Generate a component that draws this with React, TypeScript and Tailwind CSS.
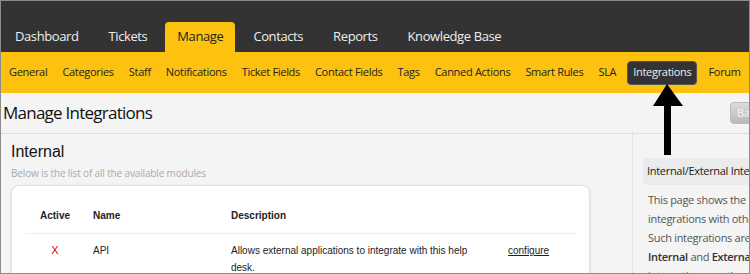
import React from "react";

// Top level tabs of the help desk admin
const mainTabs = ["Dashboard", "Tickets", "Manage", "Contacts", "Reports", "Knowledge Base"];

const subTabs = [
  "General",
  "Categories",
  "Staff",
  "Notifications",
  "Ticket Fields",
  "Contact Fields",
  "Tags",
  "Canned Actions",
  "Smart Rules",
  "SLA",
  "Integrations",
  "Forum",
];

function PointerArrow() {
  return (
    <svg
      className="absolute left-[651px] top-[83px]"
      width="32"
      height="72"
      viewBox="0 0 32 72"
      aria-hidden="true"
    >
      <polygon points="15,0 31,22 1,22" fill="#000" />
      <rect x="12" y="21" width="7" height="50" fill="#000" />
    </svg>
  );
}

export default function App() {
  return (
    <div className="relative h-[274px] w-[750px] overflow-hidden border border-[#8c8c8c] bg-[#f4f4f4] font-['Open_Sans',sans-serif]">
      {/* header */}
      <div className="flex h-[51px] items-end gap-[6px] bg-[#333] pl-[2px] tracking-[-0.4px]">
        {mainTabs.map((tab) => (
          <div
            key={tab}
            className={
              tab === "Manage"
                ? "flex h-[30px] items-center whitespace-nowrap rounded-t-[4px] bg-[#fdc20f] px-3 text-[13px] text-[#222]"
                : "flex h-[30px] items-center whitespace-nowrap px-3 text-[13px] text-[#eee]"
            }
          >
            {tab}
          </div>
        ))}
      </div>

      {/* sub navigation */}
      <div className="flex h-[41px] items-center gap-[15px] whitespace-nowrap bg-[#fdc20f] pl-[8px] text-[11px] tracking-[-0.3px] text-[#222]">
        {subTabs.map((tab) =>
          tab === "Integrations" ? (
            <div
              key={tab}
              className="-mx-[4px] flex h-[24px] items-center rounded-[4px] border border-[#555] bg-[#333] px-[5px] text-[#eee]"
            >
              {tab}
            </div>
          ) : (
            <div key={tab}>{tab}</div>
          )
        )}
      </div>

      {/* page title */}
      <div className="flex h-[41px] items-center justify-between border-b border-dotted border-[#c8c8c8]">
        <h1 className="pl-[2px] text-[17px] tracking-[-0.75px] text-[#111]">Manage Integrations</h1>
        <button className="mr-[-25px] h-[22px] w-[44px] rounded-[4px] border border-[#bbb] bg-gradient-to-b from-[#dcdcdc] to-[#b9b9b9] pl-[6px] text-left text-[11px] text-[#f4f4f4]">
          Back
        </button>
      </div>

      <div className="flex">
        {/* left column */}
        <div className="w-[632px] shrink-0 border-r border-dotted border-[#d4d4d4] pl-[10px] pr-[42px] pt-[9px]">
          <h2 className="font-['Liberation_Sans',sans-serif] text-[16px] leading-[18px] text-[#111]">Internal</h2>
          <p className="mt-[5px] text-[10px] tracking-[-0.15px] text-[#aaa]">Below is the list of all the available modules</p>

          <div className="mt-[4px] rounded-[8px] border border-[#e2e2e2] bg-white px-[13px] pt-[22px] pb-4 font-['Liberation_Sans',sans-serif] shadow-[0_1px_3px_rgba(0,0,0,0.12)]">
            <table className="w-full border-collapse text-left text-[10px] text-[#222]">
              <thead>
                <tr className="border-b border-[#eee]">
                  <th className="w-[60px] pb-[10px] text-center font-bold">Active</th>
                  <th className="w-[146px] pb-[10px] pl-[8px] font-bold">Name</th>
                  <th className="pb-[10px] font-bold">Description</th>
                  <th className="w-[88px] pb-[10px]"></th>
                </tr>
              </thead>
              <tbody>
                <tr className="align-top">
                  <td className="pt-[8px] text-center text-[11px] leading-[17px] text-[#e00000]">X</td>
                  <td className="pt-[8px] pl-[8px] leading-[17px]">API</td>
                  <td className="pt-[8px] leading-[17px]">
                    Allows external applications to integrate with this help desk.
                  </td>
                  <td className="pt-[8px] pl-[20px] leading-[17px]">
                    <a className="underline">configure</a>
                  </td>
                </tr>
              </tbody>
            </table>
          </div>
        </div>

        {/* sidebar */}
        <div className="w-[220px] shrink-0 pl-[10px] pt-[24px] text-[11px] tracking-[-0.3px]">
          <div className="flex h-[27px] items-center whitespace-nowrap rounded-[4px] bg-[#ebebeb] px-[4px] text-[#222]">
            Internal/External Integrations
          </div>
          <div className="mt-[5px] whitespace-nowrap px-[5px] leading-[19px] text-[#555]">
            <div>This page shows the list of all the</div>
            <div>integrations with other applications.</div>
            <div>Such integrations are of two types:</div>
            <div>
              <span className="font-semibold text-[#333]">Internal</span> and{" "}
              <span className="font-semibold text-[#333]">External</span>. Internal
            </div>
            <div>integrations are the ones built in.</div>
          </div>
        </div>
      </div>

      <PointerArrow />
    </div>
  );
}
